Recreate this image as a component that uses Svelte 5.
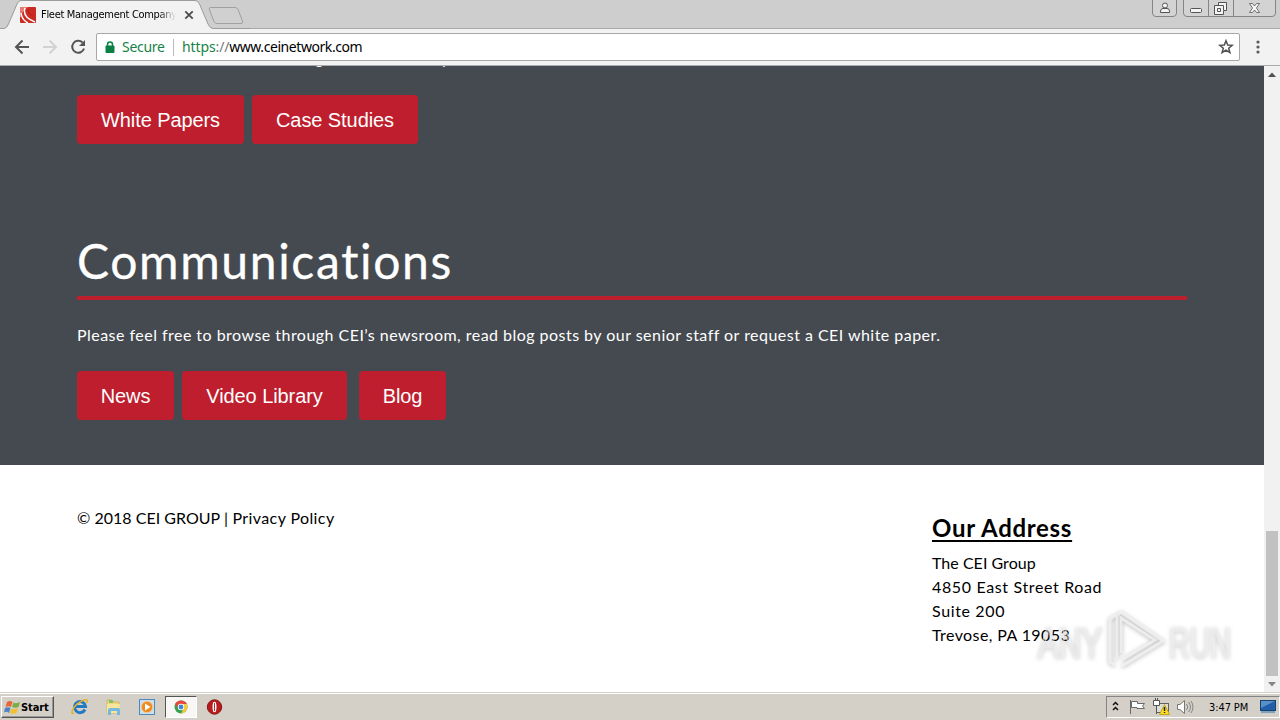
<script>
  // Buttons under each section, widths follow the site's own sizing.
  const resources = [
    { label: 'White Papers', size: 'papers' },
    { label: 'Case Studies', size: 'studies' }
  ];

  const communications = [
    { label: 'News', size: 'news' },
    { label: 'Video Library', size: 'video' },
    { label: 'Blog', size: 'blog' }
  ];

  const address = [
    { text: 'The CEI Group', fit: 'tight' },
    { text: '4850 East Street Road', fit: 'wide' },
    { text: 'Suite 200', fit: 'wide' },
    { text: 'Trevose, PA 19053', fit: 'normal' }
  ];
</script>

<div class="screen">
  <header class="tabs">
    <svg class="tab-shape" width="250" height="30" viewBox="0 0 250 30">
      <path d="M0 28.500H4Q7 28 8.500 24L17 4Q18.500 .5 21 .5H195Q198 .5 199.500 4L208 24Q210 28.500 213 28.500H250V30H0Z" fill="#f2f2f2" />
      <path d="M0 28.500H4Q7 28 8.500 24L17 4Q18.500 .5 21 .5H195Q198 .5 199.500 4L208 24Q210 28.500 213 28.500H250" fill="none" stroke="#9b9b9b" />
      <path d="M210.500 7.500H235Q237 7.500 238 9.500L242.500 21Q243.500 23.500 241 23.500H217Q215 23.500 214 21.500L209.500 10Q208.500 7.500 210.500 7.500Z" fill="#d0d0d0" stroke="#a0a0a0" />
    </svg>
    <div class="tab">
      <svg width="16" height="16" viewBox="0 0 16 16">
        <rect width="16" height="16" rx="1" fill="#cb2b23" />
        <path d="M0 0H8Q2 4 1 10H0Z" fill="#e87a70" />
        <path d="M5 1Q2 10 15 15M1 6Q2 13 8 16" fill="none" stroke="#fff" stroke-width="1.500" />
        <path d="M8 2Q8 7 13 9" fill="none" stroke="#ae211b" />
      </svg>
      <span class="tab-title">Fleet Management Company</span>
      <svg class="close" width="10" height="10" viewBox="0 0 10 10"><path d="M1.300 1.300L8.700 8.700M8.700 1.300L1.300 8.700" stroke="#4c4c4c" stroke-width="1.800" /></svg>
    </div>
    <svg class="window-buttons" width="128" height="18" viewBox="0 0 128 18">
      <g fill="#d3d3d3" stroke="#858585">
        <path d="M.5 -1V13Q.5 16.500 4 16.500H21Q24.500 16.500 24.500 13V-1" />
        <path d="M31.500 -1V13Q31.500 16.500 35 16.500H120Q123.500 16.500 123.500 13V-1M56.500 0V16M81.500 0V16" />
      </g>
      <g fill="#f4f4f4" stroke="#545454">
        <circle cx="13" cy="5.500" r="2.500" />
        <path d="M8.500 12.500V11Q9 8.500 11 8.500H15Q17.500 8.500 17.500 11V12.500Z" />
        <rect x="38.500" y="8.500" width="11" height="4" rx="1" />
        <path d="M66.500 2.500H74.500V10.500H71.500V14.500H62.500V5.500H66.500Z" />
        <path d="M66 5.500H71.500V10M65.500 8.500H68.500V11.500H65.500Z" />
        <path d="M97.500 3.500H100.500L102.500 6L104.500 3.500H107.500L104.500 8L107.500 12.500H104.500L102.500 10L100.500 12.500H97.500L100.500 8Z" stroke-width=".8" />
      </g>
    </svg>
  </header>

  <nav class="toolbar">
    <svg class="nav-icons" width="96" height="36" viewBox="0 0 96 36">
      <path d="M29 18H16.500M22.500 11.500L16 18L22.500 24.500" fill="none" stroke="#555" stroke-width="2" />
      <path d="M43 18H55.500M49.500 11.500L56 18L49.500 24.500" fill="none" stroke="#d2d2d2" stroke-width="2" />
      <path d="M82.500 13.500A6 6 0 1 0 84 19.500" fill="none" stroke="#555" stroke-width="2" />
      <path d="M85 11V17H79Z" fill="#555" />
    </svg>
    <div class="address-bar">
      <svg class="lock" width="10" height="13" viewBox="0 0 10 13">
        <path d="M2.500 6V3.500Q2.500 1 5 1Q7.500 1 7.500 3.500V6" fill="none" stroke="#0b8043" stroke-width="1.500" />
        <rect x=".5" y="4.500" width="9" height="7.500" rx="1" fill="#0b8043" />
      </svg>
      <span class="secure">Secure</span>
      <span class="divider"></span>
      <span class="url"><span class="scheme">https</span><span class="slashes">://</span>www.ceinetwork.com</span>
      <svg class="star" width="16" height="16" viewBox="0 0 16 16"><path d="M8 1.700L9.700 6L14.200 6.300L10.700 9.200L11.900 13.700L8 11.200L4.100 13.700L5.300 9.200L1.800 6.300L6.300 6Z" fill="none" stroke="#505050" stroke-width="1.500" /></svg>
    </div>
    <svg class="menu" width="4" height="14" viewBox="0 0 4 14" fill="#5a5a5a"><circle cx="2" cy="2" r="1.600" /><circle cx="2" cy="7" r="1.600" /><circle cx="2" cy="12" r="1.600" /></svg>
  </nav>

  <div class="viewport">
    <main class="page">
      <section class="dark">
        <p class="scrolled"><span>g</span><span>p</span></p>
        <div class="buttons">
          {#each resources as item}
            <button class={item.size}>{item.label}</button>
          {/each}
        </div>
        <h1>Communications</h1>
        <p class="intro">Please feel free to browse through CEI’s newsroom, read blog posts by our senior staff or request a CEI white paper.</p>
        <div class="buttons">
          {#each communications as item}
            <button class={item.size}>{item.label}</button>
          {/each}
        </div>
      </section>
      <footer>
        <p class="copyright"><span class="group">© 2018 CEI GROUP |</span> <span>Privacy Policy</span></p>
        <div class="address">
          <h2>Our Address</h2>
          {#each address as line}
            <p class={line.fit}>{line.text}</p>
          {/each}
        </div>
      </footer>
      <div class="watermark">
        <svg width="204" height="70" viewBox="0 0 204 70">
          <g class="mark">
            <text x="4" y="51" textLength="64" lengthAdjust="spacingAndGlyphs">ANY</text>
            <text x="135" y="51" textLength="62" lengthAdjust="spacingAndGlyphs">RUN</text>
            <path d="M87 47V12L121 34L89 53M82 9L76 13V56L81 59M88 60L129 35L87 6L83 9V53" />
          </g>
        </svg>
      </div>
    </main>
    <aside class="scrollbar">
      <svg width="16" height="16" viewBox="0 0 16 16"><path d="M4 11L8 6.500L12 11Z" fill="#505050" /></svg>
      <div class="thumb"></div>
      <svg width="16" height="16" viewBox="0 0 16 16"><path d="M4 6L8 10.500L12 6Z" fill="#858585" /></svg>
    </aside>
  </div>

  <div class="taskbar">
    <div class="start">
      <svg width="17" height="16" viewBox="0 0 17 16">
        <path d="M3 3Q6 1 8.500 3L7 8Q4.500 6.500 1.500 8Z" fill="#e7653a" />
        <path d="M9.500 3.500Q12 5 16 3L14.500 8Q11 9.500 8 8Z" fill="#78ae45" />
        <path d="M1 9Q4 7.500 6.500 9L5 14Q2.500 12 0 13.500Z" fill="#4b83c9" />
        <path d="M7.500 9.500Q10 11 14 9L12.500 14Q9 15.500 6 14Z" fill="#f2bf2f" />
      </svg>
      <span>Start</span>
    </div>
    <div class="launchers">
      <svg width="34" height="24" viewBox="0 0 34 24">
        <path d="M23 14.500A5.500 5.500 0 1 1 23.500 11.500H14" fill="none" stroke="#2379c4" stroke-width="3" />
        <path d="M12 18C7 21 11 9 22 5Q27 3.500 24.500 8" fill="none" stroke="#e2b325" stroke-width="1.500" />
      </svg>
      <svg width="34" height="24" viewBox="0 0 34 24">
        <path d="M11 5H16L17 7H23V18H11Z" fill="#f3d779" stroke="#c9ae58" stroke-width=".8" />
        <path d="M13 5H17V8H13Z" fill="#80c26f" /><path d="M11 9H24L23 18H11Z" fill="#f8e59b" />
        <path d="M12 20V15Q12 13 14 13H22Q24 13 24 15V20H21V16H15V20Z" fill="#75b9df" />
      </svg>
      <svg width="34" height="24" viewBox="0 0 34 24">
        <rect x="9.500" y="4.500" width="15" height="15" fill="#c9e0f3" stroke="#4f88bd" />
        <circle cx="17" cy="12" r="5.700" fill="#ee8b20" stroke="#f7c78f" />
        <path d="M15 8.500V15.500L20.500 12Z" fill="#fff" />
      </svg>
      <div class="active">
        <svg width="30" height="20" viewBox="0 0 30 20">
          <circle cx="15" cy="10" r="6.500" fill="#34a151" />
          <path d="M9 7Q11 3.500 15 3.500Q19.500 3.500 21 7H15L12 11Z" fill="#e44b3c" />
          <path d="M15 7H21Q23 13 17.500 16L15 16.500L18 11Z" fill="#f4ca38" />
          <circle cx="15" cy="10" r="3.200" fill="#fff" /><circle cx="15" cy="10" r="2.400" fill="#4285d4" />
        </svg>
      </div>
      <svg width="34" height="24" viewBox="0 0 34 24">
        <circle cx="17.500" cy="12" r="7.200" fill="#ba1a1b" stroke="#821718" />
        <ellipse cx="17.500" cy="12" rx="2" ry="5.300" fill="#fff" /><path d="M17.500 8V16" stroke="#a63535" />
      </svg>
    </div>
    <div class="tray">
      <svg width="95" height="20" viewBox="0 0 95 20">
        <path d="M6 8L8.500 5.500L11 8M6 13L8.500 10.500L11 13" fill="none" stroke="#111" stroke-width="1.500" />
        <path d="M23.500 3V17M24.500 4.500H30.500V6.500H37.500L35.500 9L37.500 11.500H30V10.500H24.500Z" fill="#fff" stroke="#696969" />
        <rect x="49.500" y="6.500" width="12" height="9" fill="#dbdfd9" stroke="#616161" />
        <path d="M46.500 3.500H52.500V8.500H46.500ZM48.500 1V4M50.500 1V4M49.500 9V17" fill="#fff" stroke="#555" />
        <path d="M57.500 7.500L62.500 17.500H52.500Z" fill="#ffde27" stroke="#c2a514" /><path d="M57.500 10V14M57.500 15V16" stroke="#222" stroke-width="1.500" />
        <path d="M70.500 7.500H73L77.500 3.500V16.500L73 12.500H70.500Z" fill="#fff" stroke="#777" />
        <path d="M79.500 7Q82 10 79.500 13M81.500 5Q85.500 10 81.500 15M84 4Q88 10 84 16" fill="none" stroke="#858585" />
      </svg>
      <span>3:47 PM</span>
      <svg class="desktop" width="17" height="16" viewBox="0 0 17 16">
        <rect x=".5" y="1.500" width="15" height="10" fill="#215ea8" stroke="#17446f" /><path d="M1 2H15L1 9Z" fill="#598fc8" /><path d="M1 13H15" stroke="#80a2bc" stroke-width="2" />
      </svg>
    </div>
  </div>
</div>

<style>
  :global(body) { margin: 0; }
  .screen { width: 1280px; height: 720px; overflow: hidden; display: flex; flex-direction: column; position: relative; color: #000; }
  svg { flex: none; display: block; }
  p, h1, h2 { margin: 0; font-weight: 400; white-space: nowrap; }
  .tabs { height: 29px; flex: none; background: #cecece; box-shadow: inset 0 -1px #aaa; display: flex; justify-content: space-between; position: relative; }
  .tab-shape { position: absolute; left: 0; top: 0; width: 250px; }
  .tab { position: relative; display: flex; height: 29px; align-items: center; padding-left: 20px; }
  .tab-title { width: 135px; margin-left: 5px; overflow: hidden; white-space: nowrap; font: 11px "DejaVu Sans Condensed", "DejaVu Sans", sans-serif; letter-spacing: -0.3px; mask-image: linear-gradient(90deg, #000 87%, transparent); }
  .close { margin-left: 8px; }
  .window-buttons { width: 128px; }
  .toolbar { height: 37px; flex: none; box-sizing: border-box; background: #f2f2f2; border-bottom: 1px solid #a8abad; display: flex; align-items: center; }
  .address-bar { width: 1144px; height: 28px; box-sizing: border-box; background: #fff; border: 1px solid #a7a7a7; border-radius: 2px; display: flex; align-items: center; font: 14px/20px "Noto Sans", sans-serif; }
  .lock { margin-left: 8px; }
  .secure { color: #188347; width: 43px; margin-left: 7px; letter-spacing: -.3px; }
  .divider { width: 1px; height: 17px; background: #bbb; margin: 0 8px 0 8px; }
  .url { letter-spacing: -0.43px; }
  .scheme { color: #188347; letter-spacing: -.1px; }
  .slashes { color: #777; letter-spacing: -.2px; }
  .star { margin-left: auto; margin-right: 5px; }
  .menu { margin-left: 16px; }
  .viewport { height: 626px; display: flex; }
  .page { width: 1264px; position: relative; background: #fff; font-family: Lato, sans-serif; }
  .dark { height: 399px; box-sizing: border-box; padding-left: 77px; background: #454a50; color: #fff; overflow: hidden; }
  .scrolled { height: 29px; padding-left: 238px; font-size: 16px; line-height: 24px; display: flex; }
  .scrolled span { width: 127px; margin-top: -20px; }
  .buttons { display: flex; gap: 8px; }
  button { height: 49px; padding: 2px 0 0; border: 0; border-radius: 4px; background: #be1e2d; color: #fff; font: 20px "Liberation Sans", Arial, sans-serif; letter-spacing: -0.08px; }
  .papers { width: 167px; }
  .studies { width: 166px; }
  .news { width: 97px; }
  .video { width: 165px; }
  .blog { width: 87px; margin-left: 4px; }
  h1 { width: 1110px; height: 156px; box-sizing: border-box; padding-top: 87px; border-bottom: 4px solid #be1e2d; font-size: 48px; line-height: 60px; letter-spacing: 1.65px; -webkit-text-stroke: .3px; }
  .intro { height: 71px; box-sizing: border-box; padding-top: 23px; font-size: 16px; line-height: 24px; letter-spacing: 0.468px; }
  footer { height: 227px; display: flex; justify-content: space-between; padding-left: 77px; }
  .copyright { padding-top: 41px; font-size: 16px; line-height: 24px; letter-spacing: 0.4px; }
  .group { letter-spacing: 0.02px; }
  .address { width: 332px; padding-top: 45px; font-size: 16px; line-height: 24px; letter-spacing: 0.5px; }
  .tight { letter-spacing: 0.03px; }
  .wide { letter-spacing: 0.64px; }
  .normal { letter-spacing: 0.4px; }
  h2 { height: 41px; font-size: 24px; line-height: 36px; font-weight: 700; letter-spacing: .7px; text-decoration: underline; text-decoration-thickness: 2px; text-underline-offset: 3px; }
  .watermark { position: absolute; left: 1034px; top: 540px; }
  .mark { font: 43px "Liberation Sans", sans-serif; fill: rgba(255,255,255,.25); stroke: rgba(238,238,238,.45); stroke-width: 2; filter: drop-shadow(0 1px 2px rgba(0,0,0,.35)); }
  .mark path { fill: none; stroke: rgba(242,242,242,.8); stroke-width: 3; }
  .scrollbar { width: 16px; background: #f1f1f1; display: flex; flex-direction: column; }
  .thumb { margin: auto 2px 0; height: 145px; width: 12px; background: #c1c1c1; }
  .taskbar { height: 28px; box-sizing: border-box; padding-bottom: 1px; padding-top: 3px; background: #d4d0c8; box-shadow: inset 0 1px #d4d0c8, inset 0 2px #fff; display: flex; align-items: center; }
  .start { width: 53px; height: 22px; margin-left: 1px; box-sizing: border-box; padding-left: 2px; border: 1px solid; border-color: #fff #555 #555 #fff; box-shadow: inset -1px -1px #999; display: flex; align-items: center; font: 700 11px "DejaVu Sans Condensed", sans-serif; letter-spacing: -.1px; }
  .launchers { height: 24px; margin-left: 8px; display: flex; align-items: center; }
  .active { width: 32px; height: 22px; box-sizing: border-box; margin-left: 1px; border: 1px solid; border-color: #555 #fff #fff #555; background: #f8f7f5; }
  .tray { width: 174px; height: 22px; box-sizing: border-box; margin-left: auto; border: 1px solid; border-color: #858585 #fff #fff #858585; display: flex; align-items: center; font: 11px "DejaVu Sans Condensed", sans-serif; }
  .tray span { width: 43px; margin-left: 7px; white-space: nowrap; letter-spacing: -.1px; }
  .desktop { margin-left: 8px; }
</style>
